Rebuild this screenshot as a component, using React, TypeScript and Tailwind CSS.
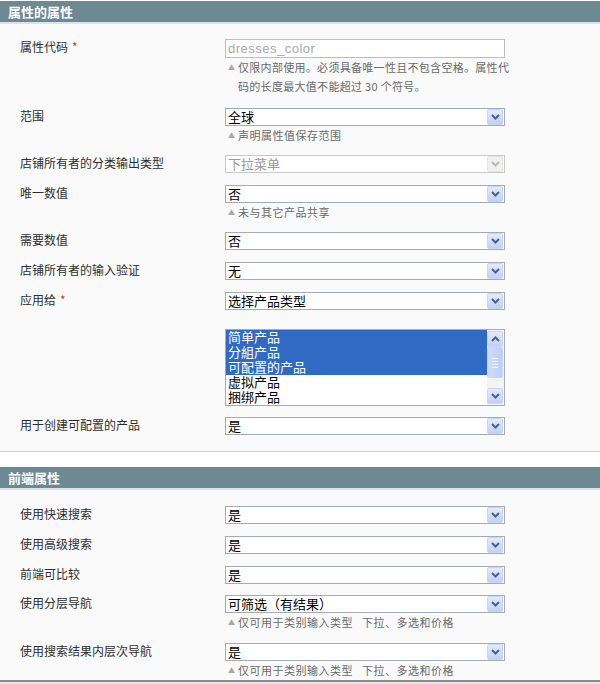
import React from 'react';

const cjk = "font-['Noto_Sans_CJK_SC','Liberation_Sans',sans-serif]";

function Chevron({ up, disabled }: { up?: boolean; disabled?: boolean }) {
  return (
    <svg width="9" height="6" viewBox="0 0 9 6" className={up ? 'rotate-180' : ''}>
      <path d="M1 1 L4.5 4.5 L8 1" fill="none" stroke={disabled ? '#b9b9b9' : '#4d6185'} strokeWidth="2" />
    </svg>
  );
}

function ArrowBtn({ up, disabled }: { up?: boolean; disabled?: boolean }) {
  return (
    <div
      className={
        'w-[16px] h-[16px] flex items-center justify-center rounded-[2px] border ' +
        (disabled
          ? 'bg-[#f0f0ee] border-[#e4e4e0]'
          : 'bg-gradient-to-b from-[#e3ebfd] to-[#c0d0f7] border-[#c8d6f5]')
      }
    >
      <Chevron up={up} disabled={disabled} />
    </div>
  );
}

function Select({ value, disabled }: { value: string; disabled?: boolean }) {
  return (
    <div
      className={
        'w-[280px] h-[18px] bg-white border flex items-center justify-between pr-px ' +
        (disabled ? 'border-[#c9c9c9]' : 'border-[#a5acb2]')
      }
    >
      <span className={'pl-[2px] text-[13px] leading-[16px] ' + (disabled ? 'text-[#9a9a9a]' : 'text-black')}>
        {value}
      </span>
      <ArrowBtn disabled={disabled} />
    </div>
  );
}

function Tri() {
  return <span className="w-[10px] shrink-0 text-[7px] text-[#a8a8a8]">▲</span>;
}

function Note({ lines }: { lines: string[] }) {
  return (
    <div className="text-[11px] text-[#6a6a6a] pl-[3px] whitespace-pre">
      {lines.map((l, i) => (
        <div key={i} className="flex items-center h-[18px]">
          <Tri />
          <span className="tracking-[0.5px]">{l}</span>
        </div>
      ))}
    </div>
  );
}

function Field({
  label,
  required,
  children,
  note,
  mb = 'mb-[12px]',
}: {
  label?: string;
  required?: boolean;
  children: React.ReactNode;
  note?: string[];
  mb?: string;
}) {
  return (
    <div className={'flex pl-[20px] ' + mb}>
      <div className="w-[205px] text-[12px] leading-[16px] text-[#2f2f2f]">
        {label}
        {required && <span className="text-[#eb340a] ml-[4px]">*</span>}
      </div>
      <div className="w-[280px]">
        {children}
        {note && <Note lines={note} />}
      </div>
    </div>
  );
}

function Header({ title }: { title: string }) {
  return (
    <div>
      <div className="h-[21px] bg-[#6d8992] text-white font-bold text-[13px] leading-[21px] pl-[8px]">{title}</div>
      <div className="h-[2px] bg-[#dae3e7]" />
    </div>
  );
}

function MultiSelect() {
  const opts = ['简单产品', '分組产品', '可配置的产品', '虚拟产品', '捆绑产品'];
  return (
    <div className="w-[280px] h-[77px] bg-white border border-[#a5acb2] flex">
      <div className="flex-1 font-['Liberation_Sans','Noto_Sans_CJK_SC',sans-serif]">
        {opts.map((o, i) => (
          <div
            key={o}
            className={
              'h-[15px] leading-[15px] text-[13px] pl-[2px] overflow-hidden ' +
              (i < 3 ? 'bg-[#316ac5] text-white' : 'text-black')
            }
          >
            {o}
          </div>
        ))}
      </div>
      <div className="w-[17px] bg-[#f4f3ee] flex flex-col justify-between py-px pr-px">
        <ArrowBtn up />
        <div className="h-[31px] rounded-[2px] border border-[#c8d6f5] bg-gradient-to-r from-[#d0ddfc] to-[#bccdf6] flex flex-col items-center justify-center gap-[2px] -mt-[10px]">
          <div className="w-[6px] h-px bg-[#eef3fe]" />
          <div className="w-[6px] h-px bg-[#eef3fe]" />
          <div className="w-[6px] h-px bg-[#eef3fe]" />
          <div className="w-[6px] h-px bg-[#eef3fe]" />
        </div>
        <ArrowBtn />
      </div>
    </div>
  );
}

export default function App() {
  return (
    <div className={'w-[600px] h-[684px] bg-[#fafafa] overflow-hidden ' + cjk}>
      <div className="h-px bg-white" />
      <Header title="属性的属性" />
      <div className="pt-[15px] pb-[4px] border-b border-[#cccccc]">
        <Field label="属性代码" required mb="mb-[12px]">
          <div className="w-[280px] h-[19px] bg-white border border-[#b9bec2] flex items-center">
            <span className="pl-[2px] text-[13px] text-[#a9a9a9] font-['Liberation_Sans',sans-serif] tracking-[0.5px]">
              dresses_color
            </span>
          </div>
          <div className="text-[11px] text-[#6a6a6a] pl-[3px] whitespace-nowrap">
            <div className="flex items-center h-[19px]">
              <Tri />
              <span className="tracking-[0.3px]">仅限内部使用。必须具备唯一性且不包含空格。属性代</span>
            </div>
            <div className="flex items-center h-[19px] pl-[10px] tracking-[0.3px]">码的长度最大值不能超过 30 个符号。</div>
          </div>
        </Field>
        <Field label="范围" note={['声明属性值保存范围']} mb="mb-[11px]">
          <Select value="全球" />
        </Field>
        <Field label="店铺所有者的分类输出类型">
          <Select value="下拉菜单" disabled />
        </Field>
        <Field label="唯一数值" note={['未与其它产品共享']} mb="mb-[11px]">
          <Select value="否" />
        </Field>
        <Field label="需要数值">
          <Select value="否" />
        </Field>
        <Field label="店铺所有者的输入验证">
          <Select value="无" />
        </Field>
        <Field label="应用给" required mb="mb-[19px]">
          <Select value="选择产品类型" />
        </Field>
        <Field mb="mb-[11px]">
          <MultiSelect />
        </Field>
        <Field label="用于创建可配置的产品">
          <Select value="是" />
        </Field>
      </div>
      <div className="h-[15px] bg-white" />
      <Header title="前端属性" />
      <div className="pt-[16px] pb-px border-b-2 border-[#8a8a8a]">
        <Field label="使用快速搜索">
          <Select value="是" />
        </Field>
        <Field label="使用高级搜索">
          <Select value="是" />
        </Field>
        <Field label="前端可比较" mb="mb-[11px]">
          <Select value="是" />
        </Field>
        <Field label="使用分层导航" note={['仅可用于类别输入类型   下拉、多选和价格']}>
          <Select value="可筛选（有结果）" />
        </Field>
        <Field label="使用搜索结果内层次导航" note={['仅可用于类别输入类型   下拉、多选和价格']} mb="mb-0">
          <Select value="是" />
        </Field>
      </div>
      <div className="h-[10px] bg-[#e8e8e8]" />
    </div>
  );
}
